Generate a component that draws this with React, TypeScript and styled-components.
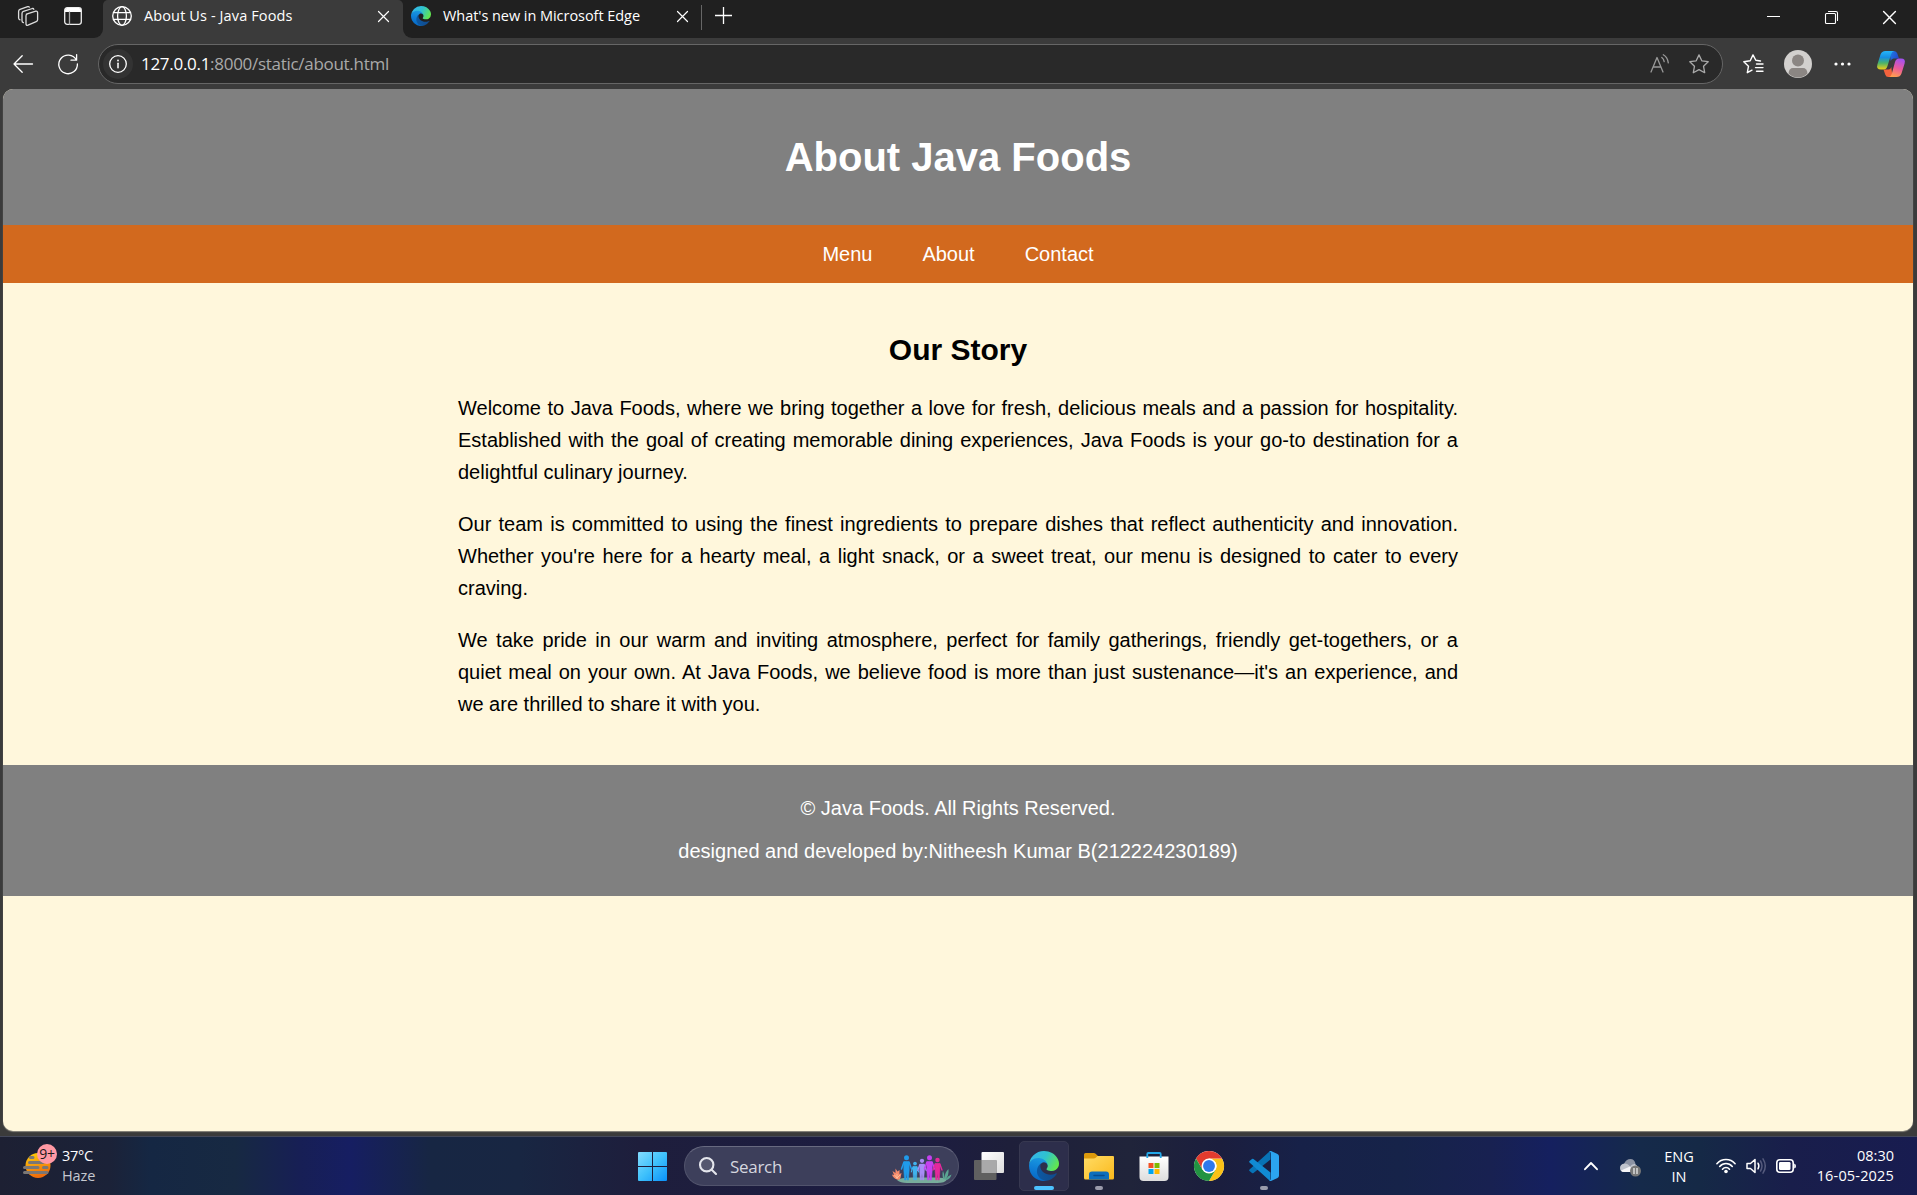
import React from 'react';
import styled, { createGlobalStyle } from 'styled-components';

const Global = createGlobalStyle`
  html, body { margin: 0; padding: 0; background: #3b3b3b; }
  *, *::before, *::after { box-sizing: border-box; }
  svg { display: block; overflow: visible; flex: none; }
`;

const UI = `"Open Sans", "Noto Sans", sans-serif`;
const PAGE = `"Liberation Sans", Arial, sans-serif`;

const Screen = styled.div`
  width: 1917px;
  height: 1195px;
  display: flex;
  flex-direction: column;
  overflow: hidden;
  background: #3b3b3b;
  font-family: ${UI};
`;

/* Browser chrome */
const TabStrip = styled.div`
  display: flex;
  height: 38px;
  flex: none;
`;
const StripLeft = styled.div`
  width: 103px;
  display: flex;
  padding: 6px 0 0 18px;
  gap: 26px;
  background: #202020;
  border-radius: 0 0 9px 0;
`;
const ActiveTabBack = styled.div`
  width: 300px;
  background: linear-gradient(#202020 10px, #3b3b3b 10px);
`;
const ActiveTab = styled.div`
  height: 38px;
  display: flex;
  padding-left: 9px;
  background: #3b3b3b;
  border-radius: 5px 5px 0 0;
`;
const StripRight = styled.div`
  flex: 1;
  display: flex;
  padding-left: 8px;
  background: #202020;
  border-radius: 0 0 0 9px;
`;
const Glyph = styled.div<{ $l?: number; $t?: number }>`
  flex: none;
  margin-left: ${p => p.$l ?? 0}px;
  margin-top: ${p => p.$t ?? 0}px;
`;
const TabTitle = styled.div<{ $w: number; $ls: number }>`
  width: ${p => p.$w}px;
  margin-left: 12px;
  font-size: 14.5px;
  line-height: 32px;
  letter-spacing: ${p => p.$ls}px;
  color: #fff;
  white-space: nowrap;
`;
const Divider = styled.div`
  width: 1px;
  height: 25px;
  margin: 5px 0 0 13px;
  background: #666;
`;
const Toolbar = styled.div`
  height: 51px;
  flex: none;
  display: flex;
  padding: 6px 0 0 13px;
  align-items: flex-start;
`;
const AddressBar = styled.div`
  width: 1625px;
  height: 40px;
  margin-left: 20px;
  padding-left: 4px;
  display: flex;
  align-items: center;
  background: #292929;
  border: 1px solid #666;
  border-radius: 20px;
`;
const InfoChip = styled.div`
  width: 30px;
  height: 30px;
  border-radius: 50%;
  background: #333;
  display: grid;
  place-items: center;
`;
const Url = styled.div`
  margin-left: 8px;
  flex: 1;
  font-size: 17px;
  line-height: 36px;
  letter-spacing: -0.29px;
  color: #a9a9a9;
  b { font-weight: 400; color: #fff; }
`;
const AddressTools = styled.div`
  display: flex;
  gap: 20px;
  margin-right: 13px;
`;

/* Web page */
const Viewport = styled.main`
  width: 1910px;
  height: 1042px;
  margin: 0 0 1px 3px;
  flex: none;
  overflow: hidden;
  border-radius: 10px;
  background: #fff7dc;
  font-family: ${PAGE};
  font-size: 20px;
  color: #000;
  box-shadow: 0 1px 1px #8d8a80;
`;
const PageHeader = styled.header`
  height: 136px;
  background: #808080;
  color: #fff;
  text-align: center;
  padding-top: 45px;
`;
const PageTitle = styled.h1`
  margin: 0;
  font-size: 40px;
  line-height: 46px;
`;
const PageNav = styled.nav`
  height: 58px;
  display: flex;
  justify-content: center;
  align-items: center;
  gap: 50px;
  background: #d2691e;
`;
const NavLink = styled.a`
  color: #fff;
  text-decoration: none;
`;
const Story = styled.section`
  width: 1000px;
  height: 482px;
  margin: 0 auto;
  padding-top: 50px;
`;
const StoryTitle = styled.h2`
  margin: 0 0 25px;
  font-size: 30px;
  line-height: 34px;
  text-align: center;
`;
const Paragraph = styled.p`
  margin: 0 0 20px;
  line-height: 32px;
  text-align: justify;
`;
const PageFooter = styled.footer`
  height: 131px;
  padding-top: 32px;
  background: #808080;
  color: #fff;
  text-align: center;
`;
const FooterLine = styled.p`
  margin: 0 0 20px;
  line-height: 23px;
`;

/* Taskbar */
const Taskbar = styled.footer`
  height: 59px;
  margin-top: 4px;
  flex: none;
  display: flex;
  align-items: flex-start;
  border-top: 1px solid #44485a;
  color: #fff;
  background: linear-gradient(90deg, #1d2033 0, #1b2238 110px, #152743 150px, #172942 235px, #171f55 300px, #161e62 350px, #172643 430px, #182642 520px, #1e1e3c 640px, #1c1c42 900px, #1e1f3a 1010px, #20243a 1130px, #1b1e3e 1220px, #172148 1300px, #162349 1400px, #182151 1490px, #15205f 1550px, #152a4a 1640px, #152946 1700px, #191e4b 1790px, #181c50 1917px);
`;
const Stack = styled.div<{ $l: number; $w: number; $align?: string; $t?: number }>`
  width: ${p => p.$w}px;
  margin-left: ${p => p.$l}px;
  padding-top: ${p => p.$t ?? 8}px;
  text-align: ${p => p.$align ?? 'left'};
  font-size: 14.5px;
  line-height: 20px;
  white-space: nowrap;
`;
const StackLine = styled.div<{ $ls?: number; $dim?: boolean }>`
  letter-spacing: ${p => p.$ls ?? 0}px;
  color: ${p => (p.$dim ? '#c5c8d0' : '#fff')};
`;
const WeatherIcon = styled.div`
  position: relative;
  width: 34px;
  height: 36px;
  margin: 7px 0 0 23px;
`;
const WeatherBadge = styled.div`
  position: absolute;
  left: 14px;
  top: 0;
  width: 20px;
  height: 20px;
  border-radius: 50%;
  background: #ff99a4;
  color: #1a1a1a;
  font-size: 14px;
  line-height: 20px;
  text-align: center;
  letter-spacing: -0.3px;
`;
const SearchBox = styled.div`
  width: 275px;
  height: 40px;
  margin: 9px 0 0 17px;
  padding: 0 6px 0 14px;
  display: flex;
  align-items: center;
  border: 1px solid #51536c;
  border-top-color: #686a80;
  border-radius: 20px;
  background: #3d3f5b;
`;
const SearchLabel = styled.div`
  flex: 1;
  margin-left: 13px;
  padding-top: 1px;
  font-size: 17px;
  line-height: 37px;
  letter-spacing: -0.3px;
  color: #d5d6df;
`;
const Apps = styled.div`
  display: flex;
  gap: 5px;
  margin: 4px 0 0 5px;
`;
const AppTile = styled.div<{ $active?: boolean }>`
  width: 50px;
  height: 50px;
  padding-top: 9px;
  display: flex;
  flex-direction: column;
  align-items: center;
  gap: 5px;
  border: 1px solid ${p => (p.$active ? '#373850' : 'transparent')};
  border-radius: 5px;
  background: ${p => (p.$active ? '#2d2e4b' : 'transparent')};
`;
const Indicator = styled.div<{ $active?: boolean }>`
  width: ${p => (p.$active ? 20 : 8)}px;
  height: 4px;
  border-radius: 2px;
  background: ${p => (p.$active ? '#4cc2ff' : '#9a9bab')};
`;

const line = { fill: 'none', stroke: '#fff', strokeWidth: 1.3, strokeLinecap: 'round', strokeLinejoin: 'round' } as const;

const WorkspacesIcon = () => (
  <svg width="20" height="20" viewBox="0 0 20 20" {...line} stroke="#ddd">
    <path d="M8.4 8.2 17.8 5.2Q19.6 4.9 19.6 6.8V13.8Q19.6 15.2 18.2 15.7L10 19.2Q8 19.8 8 17.8V9.8Q8 8.4 9.4 7.9Z" />
    <path d="M5.4 16.6Q4 16.4 4 14.8V7.4Q4 6 5.4 5.4L14.4 2.5Q15.5 2.2 15.8 3.3" />
    <path d="M2 13.8Q.6 13.4.6 12V5.4Q.6 4 2 3.4L9.7.7Q11 .3 11.3 1.2" />
  </svg>
);
const TabActionsIcon = () => (
  <svg width="18" height="18" viewBox="0 0 18 18">
    <rect x=".7" y=".7" width="16.6" height="16.6" rx="2.5" {...line} stroke="#eee" />
    <path d="M1 5V3q0-2 2-2h12q2 0 2 2v2Z" fill="#fff" />
    <path d="M5.5 5v12" {...line} stroke="#aaa" />
  </svg>
);
const GlobeIcon = () => (
  <svg width="20" height="20" viewBox="0 0 20 20" {...line}>
    <circle cx="10" cy="10" r="9.3" />
    <ellipse cx="10" cy="10" rx="4.4" ry="9.3" />
    <path d="M1.5 6.6h17M1.5 13.4h17" />
  </svg>
);
const CrossIcon = ({ size = 11 }: { size?: number }) => (
  <svg width={size} height={size} viewBox="0 0 11 11" {...line} strokeWidth={1.2}>
    <path d="M.5.5l10 10M10.5.5l-10 10" />
  </svg>
);
const PlusIcon = () => (
  <svg width="17" height="17" viewBox="0 0 17 17" {...line} strokeLinecap="butt">
    <path d="M8.5 0v17M0 8.5h17" />
  </svg>
);
const EdgeIcon = ({ size, id }: { size: number; id: string }) => (
  <svg width={size} height={size} viewBox="0 0 256 256">
    <defs>
      <linearGradient id={id + 'a'} x1="0" y1=".5" x2="1" y2=".5"><stop stopColor="#0c59a4" /><stop offset="1" stopColor="#114a8b" /></linearGradient>
      <linearGradient id={id + 'b'} x1=".6" y1="0" x2=".4" y2="1"><stop stopColor="#1b9de2" /><stop offset=".5" stopColor="#0f7fd6" /><stop offset="1" stopColor="#0667c4" /></linearGradient>
      <linearGradient id={id + 'c'} x1="0" y1=".2" x2="1" y2=".6"><stop stopColor="#35b5ee" /><stop offset=".5" stopColor="#2fc2cf" /><stop offset="1" stopColor="#63e84c" /></linearGradient>
    </defs>
    <path fill={`url(#${id}a)`} d="M231 190.500a93.700 93.700 0 0 1-10.500 4.700 101.900 101.900 0 0 1-35.900 6.500c-47.300 0-88.500-32.500-88.500-74.300a31.500 31.500 0 0 1 16.400-27.300c-42.800 1.800-53.800 46.400-53.800 72.500 0 73.900 68.100 81.400 82.800 81.400 7.900 0 19.800-2.300 27-4.600l1.300-.4a128.300 128.300 0 0 0 66.600-52.800 4 4 0 0 0-5.400-5.700Z" />
    <path fill={`url(#${id}b)`} d="M105.700 241.400a79.200 79.200 0 0 1-22.700-21.300 80.700 80.700 0 0 1 29.500-120c3.200-1.500 8.500-4.100 15.600-4a32.400 32.400 0 0 1 25.700 13 31.900 31.900 0 0 1 6.300 18.700c0-.2 24.500-79.600-80-79.600-43.900 0-80 41.700-80 78.200a130.200 130.200 0 0 0 12.100 56 128 128 0 0 0 156.400 67 75.500 75.500 0 0 1-62.800-8Z" />
    <path fill={`url(#${id}c)`} d="M152.300 148.900c-.9 1-3.400 2.500-3.400 5.600 0 2.600 1.700 5.200 4.800 7.300 14.300 10 41.400 8.600 41.500 8.600a59.600 59.600 0 0 0 30.300-8.300A61.400 61.400 0 0 0 256 109.300c.3-22.400-8-37.300-11.300-43.900C223.500 23.900 177.700 0 128 0A128 128 0 0 0 0 126.200c.5-36.500 36.800-66 80-66 3.500 0 23.500.3 42 10a72.600 72.600 0 0 1 30.900 29.300c6.100 10.600 7.200 24.100 7.200 29.500s-2.700 13.300-7.800 19.900Z" />
  </svg>
);
const BackIcon = () => (
  <svg width="20" height="18" viewBox="0 0 20 18" {...line}><path d="M19.500 9H1M9.200.8 1 9l8.200 8.200" /></svg>
);
const ReloadIcon = () => (
  <svg width="20" height="20" viewBox="0 0 20 20" {...line}><path d="M18.200 5.800A9.300 9.300 0 1 0 19.400 10M18.600.6v5.600H13" /></svg>
);
const InfoIcon = () => (
  <svg width="18" height="18" viewBox="0 0 18 18" {...line}><circle cx="9" cy="9" r="8.300" /><path d="M9 8.300v4.500" strokeWidth="1.500" /><circle cx="9" cy="5.500" r=".9" fill="#fff" stroke="none" /></svg>
);
const ReadAloudIcon = () => (
  <svg width="19" height="19" viewBox="0 0 19 19" {...line} stroke="#999"><path d="M1 18 7 3.500 13 18M3.200 13h7.700M11.800 3.500q2 1.500 2.400 4.200M13.300.8q4.200 2.300 5 8" /></svg>
);
const STAR = 'M10 .9l2.800 5.900 6.400.9-4.700 4.500 1.200 6.500L10 15.600l-5.700 3.100 1.200-6.500L.8 7.700l6.400-.9Z';
const StarIcon = () => (
  <svg width="20" height="20" viewBox="0 0 20 20" {...line} stroke="#aaa"><path d={STAR} /></svg>
);
const FavoritesIcon = () => (
  <svg width="20" height="20" viewBox="0 0 20 20" {...line} strokeWidth={1.4}><path d="M17.500 7 12.800 6.300 10 .9 7.200 6.800.8 7.700l4.700 4.500-1.200 6.500L9 16.200M13.500 10H20M12.500 13.600H20M13.500 17.200H20" /></svg>
);
const AvatarIcon = () => (
  <svg width="28" height="28" viewBox="0 0 28 28"><circle cx="14" cy="14" r="14" fill="#d2d0ce" /><circle cx="14" cy="10.500" r="6" fill="#8b8683" /><path d="M4.500 23.500Q5 18 9 18H19q4 0 4.500 5.500Q19.500 27.500 14 27.500T4.500 23.500Z" fill="#8b8683" /></svg>
);
const DotsIcon = () => (
  <svg width="17" height="4" viewBox="0 0 17 4" fill="#fff"><circle cx="2" cy="2" r="1.600" /><circle cx="8.500" cy="2" r="1.600" /><circle cx="15" cy="2" r="1.600" /></svg>
);
const CopilotIcon = () => (
  <svg width="28" height="26" viewBox="0 0 28 26">
    <defs>
      <linearGradient id="cpa" x1="0" y1="0" x2="0" y2="1"><stop stopColor="#25b5fa" /><stop offset=".35" stopColor="#168fe0" /><stop offset=".65" stopColor="#4bb369" /><stop offset="1" stopColor="#f2cf16" /></linearGradient>
      <linearGradient id="cpb" x1=".6" y1="0" x2=".3" y2="1"><stop stopColor="#a551ee" /><stop offset=".5" stopColor="#ec5a9b" /><stop offset="1" stopColor="#ffa04c" /></linearGradient>
      <linearGradient id="cpc" x1="0" y1="0" x2="1" y2=".5"><stop stopColor="#1b83e6" /><stop offset="1" stopColor="#2447ce" /></linearGradient>
    </defs>
    <path d="M12.500 0h4.500q2.500 0 3.300 2.500L22 7.500h-5.500q-2 0-2.800 2.500Z" fill="url(#cpc)" />
    <path d="M15.500 26h-4.200Q9 26 8.200 23.500L6.500 18.500h5q2 0 2.800-2.500Z" fill="#f3623d" />
    <path d="M8.500 0H17q-2 .5-2.900 3.200L10.500 15q-1 3.500-4 3.500H4q-5 0-3.600-5L3.500 3.500Q4.700 0 8.500 0Z" fill="url(#cpa)" />
    <path d="M19.500 26H12q2-.5 2.800-3.200L18 11q1-3.500 4-3.500h2q5 0 3.600 5l-3.100 10Q23.300 26 19.500 26Z" fill="url(#cpb)" />
  </svg>
);
const MinimizeIcon = () => <svg width="13" height="1" viewBox="0 0 13 1"><path d="M0 .5h13" stroke="#fff" /></svg>;
const RestoreIcon = () => (
  <svg width="13" height="13" viewBox="0 0 13 13" {...line} strokeWidth={1.100}><rect x=".5" y="2.500" width="10" height="10" rx="1" /><path d="M3.500.5H11q1.500 0 1.500 1.500v7.500" /></svg>
);
const HazeIcon = () => (
  <svg width="34" height="36" viewBox="0 0 34 36">
    <defs><linearGradient id="sun" x1="0" y1="0" x2=".3" y2="1"><stop stopColor="#ffd20a" /><stop offset="1" stopColor="#ef6c0b" /></linearGradient></defs>
    <circle cx="15" cy="21.500" r="12.500" fill="url(#sun)" />
    <path d="M7.500 13.500H10M6.500 18.500H20M1.500 23.500H15M20.500 23.500H24M1.500 28.500H24" stroke="#7b7775" strokeWidth="3" strokeLinecap="round" />
  </svg>
);
const WindowsIcon = () => (
  <svg width="29" height="29" viewBox="0 0 29 29">
    <defs><linearGradient id="win" gradientUnits="userSpaceOnUse" x1="0" y1="0" x2="29" y2="29"><stop stopColor="#84dcff" /><stop offset=".5" stopColor="#3fc1fb" /><stop offset="1" stopColor="#0a91fb" /></linearGradient></defs>
    <path fill="url(#win)" d="M1 0h13v14H0V1Q0 0 1 0ZM15 0h13q1 0 1 1v13H15ZM0 15h14v14H1q-1 0-1-1ZM15 15h14v13q0 1-1 1H15Z" />
  </svg>
);
const SearchIcon = () => (
  <svg width="18" height="18" viewBox="0 0 18 18" fill="#55576f" stroke="#e4e5ec" strokeWidth="2.100" strokeLinecap="round"><circle cx="7.700" cy="7.700" r="6.700" /><path d="m12.700 12.700 4.300 4.300" /></svg>
);
const Person = ({ x, y, h, color }: { x: number; y: number; h: number; color: string }) => (
  <g transform={`translate(${x} ${y}) scale(${h / 25})`} fill={color} stroke={color}>
    <circle cx="0" cy="2.700" r="2.500" stroke="none" />
    <path d="M-2.700 6.500h5.400V15l-.8 10H.7L0 17l-.7 8h-1.200l-.8-10Z" strokeWidth=".6" strokeLinejoin="round" />
    <path d="M-2.700 7.500-5 14M2.700 7.500 5 14" strokeWidth="1.500" strokeLinecap="round" />
  </g>
);
const FamilyIcon = () => (
  <svg width="60" height="28" viewBox="0 0 60 28">
    <path d="M5 25q3-2.500 15-2.500h24q8 0 11 2-2 3.500-10 3.500H15Q8 28 5 25Z" fill="#78ad9c" />
    <path d="M51 24q-1-6 0-8 1.500 3 1.500 7 .5-6 4-9 .5 6-2.500 10 2-3.500 5.500-4.500-1 4-4.500 5.500Z" fill="#5aa592" />
    <path d="M5 24.500Q1 23 0 19.500l2 .5-1.500-4 3 2 0-4.500 2 3 2-1.500v4l2-1-1 5Q8 25.500 5 24.500Z" fill="#f58b6c" />
    <path d="M5 24V19M2.500 20 5 23l3-3" stroke="#ffd0ab" strokeWidth=".7" fill="none" />
    <Person x={14.500} y={0} h={25} color="#209bea" />
    <Person x={23} y={6.500} h={18.500} color="#40b3ed" />
    <Person x={30} y={3.500} h={21.500} color="#a78df5" />
    <Person x={37.500} y={0} h={25} color="#c541f1" />
    <Person x={45.500} y={2.500} h={22.500} color="#e5299c" />
  </svg>
);
const TaskViewIcon = () => (
  <svg width="30" height="30" viewBox="0 0 30 30">
    <defs><linearGradient id="tv" x1="0" y1="0" x2="1" y2="1"><stop stopColor="#fff" /><stop offset="1" stopColor="#ddd" /></linearGradient></defs>
    <rect x="7.500" y="1" width="22.500" height="21" rx="1" fill="url(#tv)" />
    <rect x="0" y="9" width="22.500" height="20" rx="1" fill="#606060" />
    <path d="M7.500 9h15v13h-15Z" fill="#a9a9aa" />
  </svg>
);
const FolderIcon = () => (
  <svg width="30" height="30" viewBox="0 0 30 30">
    <defs><linearGradient id="fo" x1="0" y1="0" x2="1" y2="1"><stop stopColor="#ffdc65" /><stop offset="1" stopColor="#fbb91c" /></linearGradient></defs>
    <path d="M0 3.500Q0 2 1.500 2h8.300q1 0 1.800.8L14 5v6H0Z" fill="#dd9a0b" />
    <path d="M0 7.500h9.500q1.500 0 2.500-1L13.500 5H29q1 0 1 1v21q0 1.500-1.500 1.500h-27Q0 28.500 0 27Z" fill="url(#fo)" />
    <path d="M5 28.500v-5q0-3 3-3h14q3 0 3 3v5Z" fill="#0e6ebc" /><path d="M10 24.500h10" stroke="#074b8e" strokeWidth="1.500" strokeLinecap="round" />
  </svg>
);
const StoreIcon = () => (
  <svg width="30" height="30" viewBox="0 0 30 30">
    <defs><linearGradient id="st" x1="0" y1="0" x2="0" y2="1"><stop stopColor="#fff" /><stop offset="1" stopColor="#ddd" /></linearGradient></defs>
    <path d="M.5 5.500h29V26q0 4-4 4h-21q-4 0-4-4Z" fill="url(#st)" />
    <path d="M8.300 7V3q0-1 1-1h11.400q1 0 1 1v4" fill="none" stroke="#24a9ea" strokeWidth="1.800" />
    <path d="M9.500 12h5v5h-5Z" fill="#f25022" /><path d="M15.500 12h5v5h-5Z" fill="#7fba00" /><path d="M9.500 18h5v5h-5Z" fill="#00a4ef" /><path d="M15.500 18h5v5h-5Z" fill="#ffb900" />
  </svg>
);
const ChromeIcon = () => (
  <svg width="30" height="30" viewBox="0 0 48 48">
    <circle cx="24" cy="24" r="24" fill="#fff" />
    <path d="M44.800 12A24 24 0 0 1 24 48L34.400 30A12 12 0 0 0 34.400 18L24 12Z" fill="#fbc116" />
    <path d="M3.200 12 13.600 30 18 18 24 12h20.800A24 24 0 0 0 3.200 12Z" fill="#e33b2e" />
    <path d="M3.200 12A24 24 0 0 0 24 48L34.400 30 24 34 13.600 30Z" fill="#229342" />
    <circle cx="24" cy="24" r="12" fill="#fff" /><circle cx="24" cy="24" r="9.500" fill="#3079ed" />
  </svg>
);
const CodeIcon = () => (
  <svg width="30" height="30" viewBox="0 0 30 30">
    <path d="M21.500 0v8.500L4.500 22q-.8.600-1.500 0L.5 20q-.9-.8 0-1.600L20.500.4Z" fill="#0873b6" />
    <path d="M21.500 30v-8.500L4.500 8q-.8-.6-1.500 0L.5 10q-.9.800 0 1.600l20 18Z" fill="#118bd3" />
    <path d="M22 0l6.500 3.100Q30 3.900 30 5.500v19q0 1.600-1.500 2.400L22 30q-1.200.2-2-.8 2 .6 2-1.700V2.500Q22 .4 20 .8q.8-1 2-.8Z" fill="#2ba4f0" />
  </svg>
);
const ChevronIcon = () => <svg width="14" height="8" viewBox="0 0 14 8" {...line} strokeWidth={1.900}><path d="M1 7.200 7 1l6 6.200" /></svg>;
const CloudIcon = () => (
  <svg width="21" height="18" viewBox="0 0 21 18">
    <path d="M4 5Q6 0 10.500 0q4 0 5 5l-6 3Z" fill="#8c93a3" /><path d="M4 13q-4 0-4-4 0-4 4.500-4.500 3.500 0 5.500 3 2-3 5-2.500 2.500 1 2.500 4L12 13Z" fill="#c0c4cd" /><path d="M1 11.500 10 7.500l3 5.500H4q-2 0-3-1.500Z" fill="#f5f5f7" />
    <circle cx="15.500" cy="12" r="5.500" fill="#777" /><path d="M14 9v6M17 9v6" stroke="#fff" strokeWidth="1.100" />
  </svg>
);
const WifiIcon = () => (
  <svg width="20" height="16" viewBox="0 0 20 16" {...line} strokeWidth={1.600}><path d="M.9 5.700Q4.500 1.500 10 1.500t9.100 4.200M3.700 8.500Q6.300 5.500 10 5.500t6.300 3M6.500 11.200Q8 9.500 10 9.500t3.500 1.700" /><circle cx="10" cy="13.500" r="1.800" fill="#fff" stroke="none" /></svg>
);
const SpeakerIcon = () => (
  <svg width="20" height="16" viewBox="0 0 20 16" {...line} strokeWidth={1.500}><path d="M1 5.500h3.500L9 1.500v13l-4.500-4H1Z" /><path d="M12 5.200q1.700 2.800 0 5.600" /><path d="M14.500 3q3 5 0 10M17 .8q4.600 7.200 0 14.400" stroke="#555a7c" /></svg>
);
const BatteryIcon = () => (
  <svg width="20" height="14" viewBox="0 0 20 14"><rect x=".8" y=".8" width="16.400" height="12.400" rx="3" {...line} strokeWidth={1.600} /><rect x="3" y="3" width="11.500" height="8" rx="1.200" fill="#fff" /><path d="M18.200 4.500q1.800.5 1.800 2.500t-1.800 2.500Z" fill="#fff" /></svg>
);

const paragraphs = [
  'Welcome to Java Foods, where we bring together a love for fresh, delicious meals and a passion for hospitality. Established with the goal of creating memorable dining experiences, Java Foods is your go-to destination for a delightful culinary journey.',
  "Our team is committed to using the finest ingredients to prepare dishes that reflect authenticity and innovation. Whether you're here for a hearty meal, a light snack, or a sweet treat, our menu is designed to cater to every craving.",
  "We take pride in our warm and inviting atmosphere, perfect for family gatherings, friendly get-togethers, or a quiet meal on your own. At Java Foods, we believe food is more than just sustenance—it's an experience, and we are thrilled to share it with you.",
];

const apps = [
  { key: 'taskview', icon: <TaskViewIcon /> },
  { key: 'edge', icon: <EdgeIcon size={30} id="te" />, active: true, running: true },
  { key: 'files', icon: <FolderIcon />, running: true },
  { key: 'store', icon: <StoreIcon /> },
  { key: 'chrome', icon: <ChromeIcon /> },
  { key: 'code', icon: <CodeIcon />, running: true },
];

export default function App() {
  return (
    <Screen>
      <Global />
      <TabStrip>
        <StripLeft>
          <WorkspacesIcon />
          <Glyph $t={1}><TabActionsIcon /></Glyph>
        </StripLeft>
        <ActiveTabBack>
          <ActiveTab>
            <Glyph $t={6}><GlobeIcon /></Glyph>
            <TabTitle $w={149} $ls={0.12}>About Us - Java Foods</TabTitle>
            <Glyph $l={85} $t={11}><CrossIcon /></Glyph>
          </ActiveTab>
        </ActiveTabBack>
        <StripRight>
          <Glyph $t={6}><EdgeIcon size={20} id="fe" /></Glyph>
          <TabTitle $w={200} $ls={-0.05}>What's new in Microsoft Edge</TabTitle>
          <Glyph $l={34} $t={11}><CrossIcon /></Glyph>
          <Divider />
          <Glyph $l={13} $t={7}><PlusIcon /></Glyph>
          <Glyph $l={1035} $t={16}><MinimizeIcon /></Glyph>
          <Glyph $l={45} $t={11}><RestoreIcon /></Glyph>
          <Glyph $l={45} $t={11}><CrossIcon size={13} /></Glyph>
        </StripRight>
      </TabStrip>
      <Toolbar>
        <Glyph $t={10.5}><BackIcon /></Glyph>
        <Glyph $l={25} $t={10}><ReloadIcon /></Glyph>
        <AddressBar>
          <InfoChip><InfoIcon /></InfoChip>
          <Url><b>127.0.0.1</b>:8000/static/about.html</Url>
          <AddressTools><ReadAloudIcon /><StarIcon /></AddressTools>
        </AddressBar>
        <Glyph $l={20} $t={10}><FavoritesIcon /></Glyph>
        <Glyph $l={21} $t={6}><AvatarIcon /></Glyph>
        <Glyph $l={22} $t={18}><DotsIcon /></Glyph>
        <Glyph $l={26} $t={7}><CopilotIcon /></Glyph>
      </Toolbar>
      <Viewport>
        <PageHeader><PageTitle>About Java Foods</PageTitle></PageHeader>
        <PageNav>
          <NavLink>Menu</NavLink>
          <NavLink>About</NavLink>
          <NavLink>Contact</NavLink>
        </PageNav>
        <Story>
          <StoryTitle>Our Story</StoryTitle>
          {paragraphs.map(text => <Paragraph key={text}>{text}</Paragraph>)}
        </Story>
        <PageFooter>
          <FooterLine>© Java Foods. All Rights Reserved.</FooterLine>
          <FooterLine>designed and developed by:Nitheesh Kumar B(212224230189)</FooterLine>
        </PageFooter>
      </Viewport>
      <Taskbar>
        <WeatherIcon><HazeIcon /><WeatherBadge>9+</WeatherBadge></WeatherIcon>
        <Stack $l={5} $w={50} $t={9}>
          <StackLine $ls={-0.3}>37°C</StackLine>
          <StackLine $ls={-0.1} $dim>Haze</StackLine>
        </Stack>
        <Glyph $l={526} $t={15}><WindowsIcon /></Glyph>
        <SearchBox>
          <SearchIcon />
          <SearchLabel>Search</SearchLabel>
          <Glyph $t={5}><FamilyIcon /></Glyph>
        </SearchBox>
        <Apps>
          {apps.map(app => (
            <AppTile key={app.key} $active={app.active}>
              {app.icon}
              {app.running && <Indicator $active={app.active} />}
            </AppTile>
          ))}
        </Apps>
        <Glyph $l={295} $t={25}><ChevronIcon /></Glyph>
        <Glyph $l={22} $t={22}><CloudIcon /></Glyph>
        <Stack $l={18} $w={40} $align="center" $t={10}>
          <StackLine>ENG</StackLine>
          <StackLine>IN</StackLine>
        </Stack>
        <Glyph $l={17} $t={21}><WifiIcon /></Glyph>
        <Glyph $l={10} $t={21}><SpeakerIcon /></Glyph>
        <Glyph $l={10} $t={22}><BatteryIcon /></Glyph>
        <Stack $l={12} $w={86} $align="right" $t={9}>
          <StackLine>08:30</StackLine>
          <StackLine $ls={0.17}>16-05-2025</StackLine>
        </Stack>
      </Taskbar>
    </Screen>
  );
}
